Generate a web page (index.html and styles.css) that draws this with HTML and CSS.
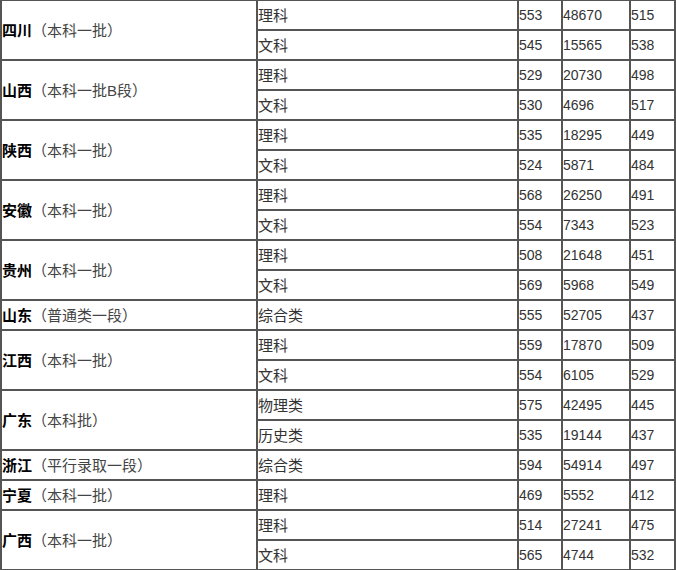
FILE: index.html
```html
<!DOCTYPE html>
<html lang="zh-CN">
<head>
<meta charset="utf-8">
<title>分数线</title>
<link rel="stylesheet" href="styles.css">
</head>
<body>
<table class="scores">
  <tbody>
    <tr>
      <td class="prov w1" rowspan="2"><strong>四川</strong>（本科一批）</td>
      <td class="w2">理科</td><td class="w3">553</td><td class="w4">48670</td><td class="w5">515</td>
    </tr>
    <tr><td>文科</td><td>545</td><td>15565</td><td>538</td></tr>
    <tr>
      <td class="prov" rowspan="2"><strong>山西</strong>（本科一批B段）</td>
      <td>理科</td><td>529</td><td>20730</td><td>498</td>
    </tr>
    <tr><td>文科</td><td>530</td><td>4696</td><td>517</td></tr>
    <tr>
      <td class="prov" rowspan="2"><strong>陕西</strong>（本科一批）</td>
      <td>理科</td><td>535</td><td>18295</td><td>449</td>
    </tr>
    <tr><td>文科</td><td>524</td><td>5871</td><td>484</td></tr>
    <tr>
      <td class="prov" rowspan="2"><strong>安徽</strong>（本科一批）</td>
      <td>理科</td><td>568</td><td>26250</td><td>491</td>
    </tr>
    <tr><td>文科</td><td>554</td><td>7343</td><td>523</td></tr>
    <tr>
      <td class="prov" rowspan="2"><strong>贵州</strong>（本科一批）</td>
      <td>理科</td><td>508</td><td>21648</td><td>451</td>
    </tr>
    <tr><td>文科</td><td>569</td><td>5968</td><td>549</td></tr>
    <tr>
      <td class="prov"><strong>山东</strong>（普通类一段）</td>
      <td>综合类</td><td>555</td><td>52705</td><td>437</td>
    </tr>
    <tr>
      <td class="prov" rowspan="2"><strong>江西</strong>（本科一批）</td>
      <td>理科</td><td>559</td><td>17870</td><td>509</td>
    </tr>
    <tr><td>文科</td><td>554</td><td>6105</td><td>529</td></tr>
    <tr>
      <td class="prov" rowspan="2"><strong>广东</strong>（本科批）</td>
      <td>物理类</td><td>575</td><td>42495</td><td>445</td>
    </tr>
    <tr><td>历史类</td><td>535</td><td>19144</td><td>437</td></tr>
    <tr>
      <td class="prov"><strong>浙江</strong>（平行录取一段）</td>
      <td>综合类</td><td>594</td><td>54914</td><td>497</td>
    </tr>
    <tr>
      <td class="prov"><strong>宁夏</strong>（本科一批）</td>
      <td>理科</td><td>469</td><td>5552</td><td>412</td>
    </tr>
    <tr>
      <td class="prov" rowspan="2"><strong>广西</strong>（本科一批）</td>
      <td>理科</td><td>514</td><td>27241</td><td>475</td>
    </tr>
    <tr><td>文科</td><td>565</td><td>4744</td><td>532</td></tr>
  </tbody>
</table>
</body>
</html>
```

FILE: styles.css
```css
html, body {
  margin: 0;
  padding: 0;
  background: #fff;
}

body {
  font-family: "Liberation Sans", "Noto Sans CJK SC", sans-serif;
  font-size: 14px;
  color: #333;
  overflow: hidden;
}

.scores {
  margin-top: -1px;
  width: 676px;
  table-layout: fixed;
  border-collapse: separate;
  border-spacing: 0;
  border: 1px solid #555;
}

.scores td {
  box-sizing: border-box;
  height: 30px;
  padding: 0;
  border: 1px solid #555;
  vertical-align: middle;
  text-align: left;
  line-height: 20px;
  white-space: nowrap;
  overflow: hidden;
  text-spacing-trim: space-all;
}

.scores .w1 { width: 256px; }
.scores .w2 { width: 261px; }
.scores .w3 { width: 44px; }
.scores .w4 { width: 68px; }
.scores .w5 { width: 45px; }

/* CJK cells: province column and subject column */
.scores .prov,
.scores .prov + td,
.scores tr > td:first-child:not(.prov) {
  font-size: 15px;
  padding-top: 2px;
}

.prov {
  color: #444;
}

.prov strong {
  color: #000;
  font-weight: bold;
}
```
